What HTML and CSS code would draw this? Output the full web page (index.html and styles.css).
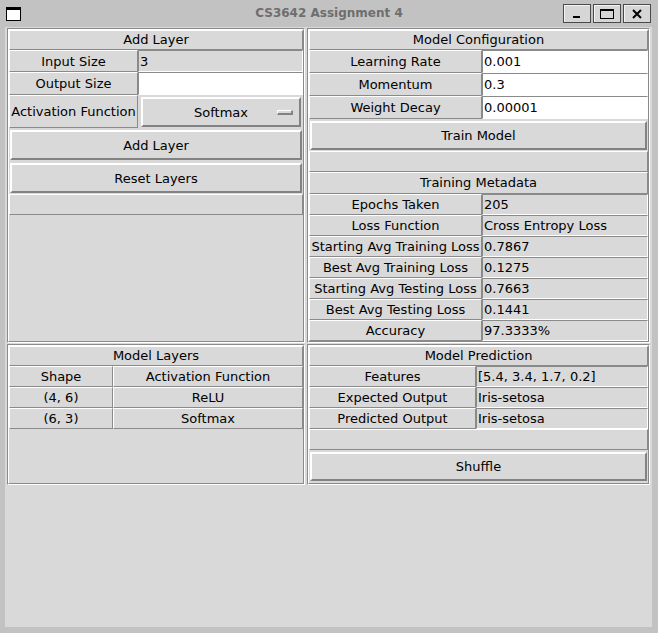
FILE: index.html
```html
<!DOCTYPE html>
<html>
<head>
<meta charset="utf-8">
<link rel="stylesheet" href="styles.css">
</head>
<body>
<div class="window">
  <div class="titlebar">
    <div class="winicon"></div>
    <div class="title">CS3642 Assignment 4</div>
    <div class="wbtns">
      <div class="wbtn"><svg width="10" height="10" viewBox="0 0 10 10"><rect x="1" y="7" width="7" height="2" fill="#000"/></svg></div>
      <div class="wbtn"><svg width="14" height="10" viewBox="0 0 14 10"><rect x="0.5" y="0.5" width="13" height="9" fill="none" stroke="#000"/><rect x="0" y="0" width="14" height="2" fill="#000"/></svg></div>
      <div class="wbtn"><svg width="10" height="10" viewBox="0 0 10 10"><path d="M1 1 L9 9 M9 1 L1 9" stroke="#000" stroke-width="2"/></svg></div>
    </div>
  </div>
  <div class="client">
    <div class="panels">
      <section class="panel"><div class="pgrid addlayer">
        <div class="cell head span2">Add Layer</div>
        <div class="cell lbl">Input Size</div>
        <div class="cell val">3</div>
        <div class="cell lbl">Output Size</div>
        <div class="cell entry"></div>
        <div class="cell lbl">Activation Function</div>
        <div class="optwrap"><div class="optmenu"><span>Softmax</span><span class="ind"></span></div></div>
        <div class="btnrow span2"><div class="btn">Add Layer</div></div>
        <div class="btnrow span2"><div class="btn">Reset Layers</div></div>
        <div class="cell head span2"></div>
      </div></section>

      <section class="panel"><div class="pgrid config">
        <div class="cell head span2">Model Configuration</div>
        <div class="cell lbl">Learning Rate</div>
        <div class="cell entry">0.001</div>
        <div class="cell lbl">Momentum</div>
        <div class="cell entry">0.3</div>
        <div class="cell lbl">Weight Decay</div>
        <div class="cell entry">0.00001</div>
        <div class="btnrow span2"><div class="btn">Train Model</div></div>
        <div class="cell head span2"></div>
        <div class="cell head span2">Training Metadata</div>
        <div class="cell lbl">Epochs Taken</div>
        <div class="cell val">205</div>
        <div class="cell lbl">Loss Function</div>
        <div class="cell val">Cross Entropy Loss</div>
        <div class="cell lbl">Starting Avg Training Loss</div>
        <div class="cell val">0.7867</div>
        <div class="cell lbl">Best Avg Training Loss</div>
        <div class="cell val">0.1275</div>
        <div class="cell lbl">Starting Avg Testing Loss</div>
        <div class="cell val">0.7663</div>
        <div class="cell lbl">Best Avg Testing Loss</div>
        <div class="cell val">0.1441</div>
        <div class="cell lbl">Accuracy</div>
        <div class="cell val">97.3333%</div>
      </div></section>

      <section class="panel"><div class="pgrid layers">
        <div class="cell head span2">Model Layers</div>
        <div class="cell lbl">Shape</div>
        <div class="cell lbl">Activation Function</div>
        <div class="cell lbl">(4, 6)</div>
        <div class="cell lbl">ReLU</div>
        <div class="cell lbl">(6, 3)</div>
        <div class="cell lbl">Softmax</div>
      </div></section>

      <section class="panel"><div class="pgrid predict">
        <div class="cell head span2">Model Prediction</div>
        <div class="cell lbl">Features</div>
        <div class="cell val">[5.4, 3.4, 1.7, 0.2]</div>
        <div class="cell lbl">Expected Output</div>
        <div class="cell val">Iris-setosa</div>
        <div class="cell lbl">Predicted Output</div>
        <div class="cell val">Iris-setosa</div>
        <div class="cell head span2"></div>
        <div class="btnrow span2"><div class="btn">Shuffle</div></div>
      </div></section>
    </div>
  </div>
</div>
</body>
</html>
```

FILE: styles.css
```css
* { box-sizing: border-box; }
html, body { margin: 0; padding: 0; }
body {
  width: 658px;
  height: 633px;
  overflow: hidden;
  background: #c2c2c2;
  font-family: "DejaVu Sans", sans-serif;
  font-size: 13px;
  color: #000;
}
.window {
  width: 658px;
  height: 633px;
  background: #c2c2c2;
  display: flex;
  flex-direction: column;
}
.titlebar {
  height: 27px;
  flex: none;
  display: flex;
  align-items: center;
  position: relative;
}
.winicon {
  margin-left: 6px;
  width: 15px;
  height: 14px;
  border: 1px solid #000;
  border-top-width: 3px;
  background: #fff;
}
.title {
  position: absolute;
  left: 0;
  right: 0;
  top: 6px;
  text-align: center;
  font-weight: bold;
  font-size: 12px;
  color: #6e6e6e;
}
.wbtns {
  margin-left: auto;
  margin-right: 7px;
  display: flex;
  gap: 2px;
  position: relative;
}
.wbtn {
  width: 28px;
  height: 19px;
  border: 1px solid #4a4a4a;
  background: #d6d6d6;
  box-shadow: inset 1px 1px 0 #f4f4f4;
  display: flex;
  align-items: center;
  justify-content: center;
}
.client {
  margin: 0 6px 6px 5px;
  flex: 1;
  background: #d9d9d9;
}
.panels {
  display: grid;
  grid-template-columns: 298px 343px;
  grid-template-rows: 315px 141px;
  gap: 1px 2px;
  padding: 1px 2px;
}
.panel {
  border: 1px solid;
  border-color: #8a8a8a #fff #fff #8a8a8a;
  display: flex;
}
.pgrid {
  flex: 1;
  border: 1px solid;
  border-color: #fff #8a8a8a #8a8a8a #fff;
  display: grid;
  align-content: start;
}
.addlayer {
  grid-template-columns: 129px 1fr;
  grid-template-rows: 20px 22px 23px 33px 33px 33px 21px;
}
.config {
  grid-template-columns: 173px 1fr;
  grid-template-rows: 20px 23px 23px 23px 32px 21px 22px repeat(7, 21px);
}
.layers {
  grid-template-columns: 104px 1fr;
  grid-template-rows: 20px 21px 21px 21px;
}
.predict {
  grid-template-columns: 167px 1fr;
  grid-template-rows: 20px 21px 21px 21px 21px 32px;
}
.span2 { grid-column: 1 / 3; }
.cell {
  border: 1px solid;
  border-color: #fff #8a8a8a #8a8a8a #fff;
  display: flex;
  align-items: center;
  white-space: nowrap;
  overflow: hidden;
}
.head { padding-bottom: 1px; }
.head, .lbl { justify-content: center; }
.val { padding-left: 1px; border-color: #8a8a8a #fff #fff #8a8a8a; }
.entry {
  background: #fff;
  padding-left: 1px;
  border-color: #8a8a8a #fff #fff #8a8a8a;
}
.optwrap { padding: 2px 2px 1px 3px; }
.optmenu {
  height: 100%;
  border: 2px solid;
  border-color: #fff #828282 #828282 #fff;
  display: flex;
  align-items: center;
  justify-content: center;
  position: relative;
}
.ind {
  position: absolute;
  right: 6px;
  top: 11px;
  width: 16px;
  height: 5px;
  border: 1px solid;
  border-color: #fff #828282 #828282 #fff;
  border-width: 1px 2px 2px 1px;
}
.btnrow { padding: 2px 1px 1px 1px; }
.btn {
  height: 100%;
  border: 2px solid;
  border-color: #fff #828282 #828282 #fff;
  display: flex;
  align-items: center;
  justify-content: center;
}
```
